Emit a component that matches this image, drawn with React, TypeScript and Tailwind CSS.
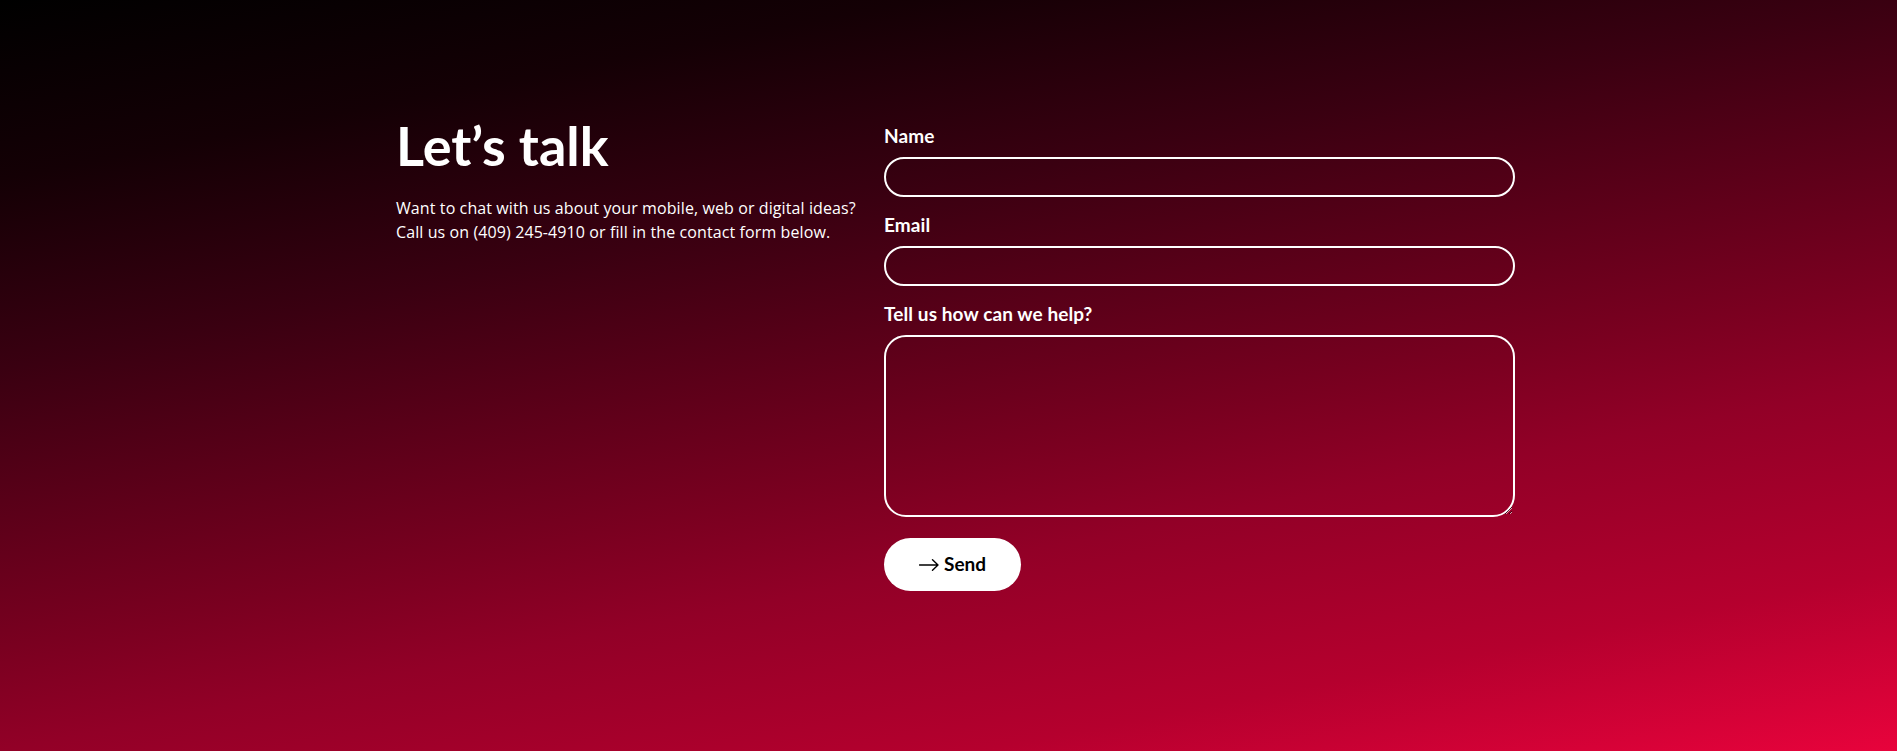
import React from 'react';

function ArrowIcon() {
  return (
    <svg width="20" height="12" viewBox="0 0 20 12" fill="none" className="shrink-0">
      <path d="M0.5 6h18.5M13.5 0.8 19 6l-5.5 5.2" stroke="#000" strokeWidth="1.4" strokeLinecap="round" strokeLinejoin="round" />
    </svg>
  );
}

export default function App() {
  const labelCls = "block text-[19px] leading-[20px] font-bold tracking-[0.1px] text-white font-['Lato',sans-serif]";
  const inputCls = 'block w-full h-[40px] rounded-full border-2 border-white bg-transparent px-5 text-white outline-none';

  return (
    <div className="min-h-screen w-full bg-[linear-gradient(169deg,#000000_0%,#140005_16%,#3a0011_33%,#7a0020_58%,#920027_67%,#b5002e_84%,#e8033c_100%)]">
      <section className="flex justify-center pt-[119px]">
        <div className="flex w-[1133px] pl-[14px]">
          {/* Intro */}
          <div className="w-[488px] shrink-0">
            <h1 className="text-[54px] leading-none font-bold text-white font-['Lato',sans-serif]">Let’s talk</h1>
            <p className="mt-[23px] text-[16px] leading-[24px] tracking-[0.1px] text-white font-['Open_Sans',sans-serif]">
              Want to chat with us about your mobile, web or digital ideas?
              <br />
              Call us on (409) 245-4910 or fill in the contact form below.
            </p>
          </div>

          {/* Form */}
          <form className="mt-[7px] w-[631px]" onSubmit={(e) => e.preventDefault()}>
            <label className={labelCls} htmlFor="name">Name</label>
            <input id="name" type="text" className={`mt-[11px] ${inputCls}`} />

            <label className={`mt-[18px] ${labelCls}`} htmlFor="email">Email</label>
            <input id="email" type="email" className={`mt-[11px] ${inputCls}`} />

            <label className={`mt-[18px] ${labelCls}`} htmlFor="message">Tell us how can we help?</label>
            <textarea
              id="message"
              className="mt-[11px] block h-[182px] w-full rounded-[22px] border-2 border-white bg-transparent px-5 py-3 text-white outline-none"
            />

            <button
              type="submit"
              className="mt-[21px] flex h-[53px] items-center gap-[5px] rounded-full bg-white px-[35px] text-[19px] font-bold text-black font-['Lato',sans-serif]"
            >
              <ArrowIcon />
              Send
            </button>
          </form>
        </div>
      </section>
    </div>
  );
}
